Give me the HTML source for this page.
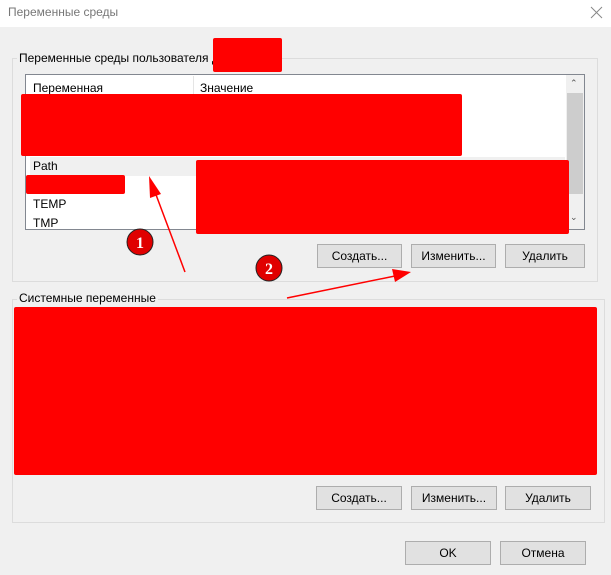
<!DOCTYPE html>
<html><head><meta charset="utf-8"><style>
*{margin:0;padding:0;box-sizing:border-box}
body{width:611px;height:575px;background:#f0f0f0;position:relative;overflow:hidden;font-family:"Liberation Sans",sans-serif;font-size:12px;color:#000}
.a{position:absolute}
.btn{position:absolute;background:#e1e1e1;border:1px solid #adadad;text-align:center;line-height:22px;font-size:12px}
.red{position:absolute;background:#ff0000}
.grp{position:absolute;border:1px solid #dcdcdc}
.lg{position:absolute;background:#f0f0f0;padding:0 2px;font-size:12px;line-height:14px}
</style></head><body>
<div class="a" style="left:0;top:0;width:611px;height:27px;background:#fff"></div>
<div class="a" style="left:8px;top:5px;font-size:12px;color:#777">Переменные среды</div>
<svg class="a" style="left:589px;top:5px" width="16" height="16"><path d="M2 2L13 13M13 2L2 13" stroke="#888" stroke-width="1"/></svg>

<div class="grp" style="left:12px;top:58px;width:586px;height:224px"></div>
<div class="lg" style="left:17px;top:51px">Переменные среды пользователя д</div>
<div class="red" style="left:213px;top:38px;width:69px;height:34px;border-radius:2px"></div>

<div class="a" style="left:25px;top:74px;width:560px;height:156px;background:#fff;border:1px solid #828790"></div>
<div class="a" style="left:33px;top:81px">Переменная</div>
<div class="a" style="left:193px;top:76px;width:1px;height:22px;background:#e5e5e5"></div>
<div class="a" style="left:200px;top:81px">Значение</div>
<div class="a" style="left:30px;top:157px;width:535px;height:19px;background:#f0f0f0"></div>
<div class="a" style="left:33px;top:159px">Path</div>
<div class="a" style="left:33px;top:197px">TEMP</div>
<div class="a" style="left:33px;top:216px">TMP</div>
<div class="a" style="left:566px;top:75px;width:18px;height:154px;background:#f0f0f0"></div>
<div class="a" style="left:567px;top:93px;width:16px;height:101px;background:#cdcdcd"></div>
<div class="a" style="left:570px;top:78px;font-size:9px;color:#555">&#8963;</div>
<div class="a" style="left:570px;top:212px;font-size:9px;color:#555">&#8964;</div>
<div class="red" style="left:21px;top:94px;width:441px;height:62px;border-radius:2px"></div>
<div class="red" style="left:26px;top:175px;width:99px;height:19px;border-radius:2px"></div>
<div class="red" style="left:196px;top:160px;width:373px;height:74px;border-radius:2px"></div>

<div class="btn" style="left:317px;top:244px;width:85px;height:24px">Создать...</div>
<div class="btn" style="left:411px;top:244px;width:85px;height:24px">Изменить...</div>
<div class="btn" style="left:505px;top:244px;width:80px;height:24px">Удалить</div>

<div class="grp" style="left:12px;top:299px;width:593px;height:224px"></div>
<div class="lg" style="left:17px;top:291px">Системные переменные</div>
<div class="red" style="left:14px;top:307px;width:583px;height:168px;border-radius:2px"></div>
<div class="btn" style="left:316px;top:486px;width:86px;height:24px">Создать...</div>
<div class="btn" style="left:411px;top:486px;width:86px;height:24px">Изменить...</div>
<div class="btn" style="left:505px;top:486px;width:86px;height:24px">Удалить</div>

<div class="btn" style="left:405px;top:541px;width:86px;height:24px">OK</div>
<div class="btn" style="left:500px;top:541px;width:86px;height:24px">Отмена</div>

<svg class="a" style="left:0;top:0" width="611" height="575">
<line x1="185" y1="272" x2="155" y2="192" stroke="#f00" stroke-width="1.5"/>
<polygon points="149,176 161,194 150,198" fill="#f00"/>
<line x1="287" y1="298" x2="395" y2="276" stroke="#f00" stroke-width="1.5"/>
<polygon points="411,272 392,269 395,282" fill="#f00"/>
<circle cx="140" cy="242" r="13" fill="#e00000" stroke="#222" stroke-width="1"/>
<text x="140" y="248" text-anchor="middle" fill="#fff" font-family="Liberation Serif" font-weight="bold" font-size="16">1</text>
<circle cx="269" cy="268" r="13" fill="#e00000" stroke="#222" stroke-width="1"/>
<text x="269" y="274" text-anchor="middle" fill="#fff" font-family="Liberation Serif" font-weight="bold" font-size="16">2</text>
</svg>
</body></html>
